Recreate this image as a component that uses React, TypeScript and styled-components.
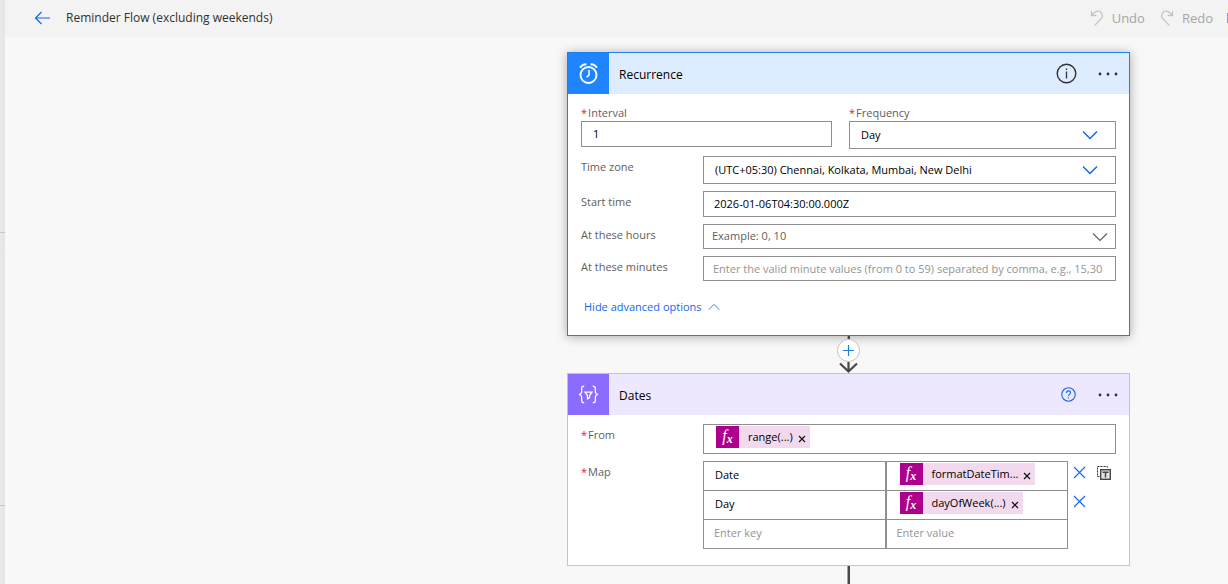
import React from "react";
import styled, { createGlobalStyle } from "styled-components";

const GlobalStyle = createGlobalStyle`
  *, *::before, *::after { box-sizing: border-box; }
  body {
    margin: 0;
    background: #f8f8f8;
    font-family: "Open Sans", "Noto Sans", sans-serif;
    font-size: 11px;
    color: #000;
    overflow-x: hidden;
  }
  button, input, select { font: inherit; color: inherit; }
  button { padding: 0; border: 0; background: none; cursor: pointer; }
  svg { display: block; flex: none; }
`;

const Page = styled.div`
  display: flex;
  min-height: 100vh;
`;

const Rail = styled.aside`
  flex: none;
  width: 5px;
  background: linear-gradient(90deg, #e9e9e9, #e5e5e5);
`;

const RailSection = styled.div<{ $height: number }>`
  height: ${(p) => p.$height}px;
  border-bottom: 1px solid #c8c8c8;
`;

const Main = styled.main`
  flex: 1;
  min-width: 0;
  display: flex;
  flex-direction: column;
`;

const TopBar = styled.header`
  display: flex;
  align-items: center;
  height: 37px;
  padding: 0 0 2px 29px;
  background: #f3f3f3;
`;

const BackButton = styled.button`
  margin-right: 15px;
`;

const FlowTitle = styled.h1`
  margin: 0;
  flex: 1;
  font-size: 12px;
  font-weight: 400;
  line-height: 20px;
  color: #323130;
`;

const Command = styled.button`
  display: flex;
  align-items: center;
  gap: 8px;
  margin-left: 15px;
  font-size: 13px;
  line-height: 20px;
  color: #a6a6a6;
`;

const BarEdge = styled.span`
  width: 1px;
  height: 10px;
  margin-left: 14px;
  background: #a58af0;
`;

const Canvas = styled.div`
  flex: 1;
  display: grid;
  grid-template-columns: minmax(0, 562fr) minmax(563px, 563fr) minmax(0, 98fr);
  padding-top: 15px;
`;

const Flow = styled.div`
  grid-column: 2;
  display: flex;
  flex-direction: column;
`;

const Card = styled.section<{ $selected?: boolean }>`
  border: 1px solid ${(p) => (p.$selected ? "#1f80ec" : "#c4c4c4")};
  background: #fff;
  box-shadow: ${(p) => (p.$selected ? "0 1px 10px rgba(0, 0, 0, 0.32)" : "none")};
`;

const CardHeader = styled.header<{ $bg: string }>`
  display: flex;
  align-items: center;
  height: 41px;
  padding-right: 11px;
  background: ${(p) => p.$bg};
`;

const CardIcon = styled.div<{ $bg: string }>`
  display: grid;
  place-items: center;
  width: 41px;
  height: 41px;
  background: ${(p) => p.$bg};
`;

const CardTitle = styled.h2`
  flex: 1;
  margin: 0 0 0 10px;
  padding-top: 2px;
  font-size: 12px;
  font-weight: 400;
  line-height: 20px;
`;

const HeaderAction = styled.button<{ $gap?: number }>`
  margin-right: ${(p) => p.$gap ?? 0}px;
`;

const CardBody = styled.div<{ $top: number; $bottom: number }>`
  display: flex;
  flex-direction: column;
  gap: 7px;
  padding: ${(p) => p.$top}px 13px ${(p) => p.$bottom}px;
`;

const PairRow = styled.div`
  display: grid;
  grid-template-columns: 251fr 267fr;
  column-gap: 17px;
  align-items: start;
`;

const TopLabel = styled.label`
  display: block;
  line-height: 16px;
  color: #605e5c;
`;

const Row = styled.div`
  display: grid;
  grid-template-columns: 122px minmax(0, 1fr);
  align-items: start;
`;

const Label = styled.label`
  line-height: 22px;
  color: #605e5c;
`;

const Star = styled.span`
  margin-right: 1px;
  color: #e0182d;
`;

const TextBox = styled.input<{ $height: number; $pad: number }>`
  display: block;
  width: 100%;
  height: ${(p) => p.$height}px;
  padding: 0 ${(p) => p.$pad}px 1px;
  border: 1px solid #8f8f8f;
  border-radius: 0;
  background: #fff;
  outline: 0;
  &::placeholder { color: #949494; opacity: 1; }
`;

const SelectWrap = styled.div`
  display: grid;
  align-items: center;
  & > * { grid-area: 1 / 1; }
  & > svg { justify-self: end; margin-right: 18px; pointer-events: none; }
  & > svg[data-tone="muted"] { margin-right: 8px; }
`;

const SelectBox = styled.select<{ $height: number; $muted?: boolean }>`
  appearance: none;
  width: 100%;
  height: ${(p) => p.$height}px;
  padding: 0 ${(p) => (p.$muted ? 8 : 11)}px 2px;
  border: 1px solid #8f8f8f;
  border-radius: 0;
  background: #fff;
  color: ${(p) => (p.$muted ? "#605e5c" : "#000")};
`;

const AdvancedToggle = styled.button`
  display: flex;
  align-items: center;
  align-self: flex-start;
  gap: 6px;
  margin: 8px 0 0 3px;
  line-height: 22px;
  color: #1267f0;
`;

const Connector = styled.div`
  display: flex;
  flex-direction: column;
  align-items: center;
`;

const Stem = styled.div<{ $grow?: boolean }>`
  width: 3px;
  height: 3px;
  flex: ${(p) => (p.$grow ? "1" : "none")};
  align-self: center;
  border-left: 1px solid #a0a0a0;
  background: #484848;
`;

const AddStep = styled.button`
  display: grid;
  place-items: center;
  width: 23px;
  height: 23px;
  border: 1px solid #c4c4c4;
  border-radius: 50%;
  background: #fff;
`;

const TokenField = styled.div`
  height: 30px;
  padding: 1px 12px;
  border: 1px solid #8f8f8f;
`;

const Token = styled.span`
  display: inline-flex;
  align-items: center;
  height: 22px;
  padding-right: 4px;
  background: #f3d9ed;
  vertical-align: top;
  line-height: 22px;
  white-space: nowrap;
`;

const TokenIcon = styled.span`
  width: 23px;
  height: 22px;
  margin-right: 9px;
  background: #ad008c;
  color: #fff;
  font: italic 400 16px/20px "Liberation Serif", serif;
  text-align: center;
  sub { font-size: 12px; font-weight: 700; line-height: 0; vertical-align: -2px; }
`;

const TokenRemove = styled.button`
  margin: 3px 0 0 5px;
`;

const MapTable = styled.table`
  width: 100%;
  border-collapse: collapse;
  table-layout: fixed;
`;

const KeyCell = styled.td`
  width: 182px;
  height: 29px;
  padding: 0;
  border: 1px solid #8f8f8f;
  border-right-width: 2px;
  vertical-align: top;
`;

const ValueCell = styled.td`
  width: 182px;
  padding: 1px 0 0 13px;
  border: 1px solid #8f8f8f;
  vertical-align: top;
`;

const ActionCell = styled.td`
  padding: 0 0 7px 5px;
`;

const ActionGroup = styled.div`
  display: flex;
  align-items: center;
  gap: 11px;
  height: 16px;
`;

const CellInput = styled.input<{ $pad: number }>`
  display: block;
  width: 100%;
  height: 25px;
  padding: 0 ${(p) => p.$pad}px;
  border: 0;
  background: transparent;
  outline: 0;
  &::placeholder { color: #949494; opacity: 1; }
`;

const EmptyValueCell = styled(ValueCell)`
  padding: 0;
`;

const Chevron = ({ muted, up, w = 16 }: { muted?: boolean; up?: boolean; w?: number }) => (
  <svg width={w} height={w / 2 + 2} viewBox="0 0 16 10" fill="none" data-tone={muted ? "muted" : "accent"}
    stroke={muted ? "#605e5c" : "#1267f0"} strokeWidth={muted || up ? 1.1 : 1.5}>
    <path d={up ? "M1 8.5 8 1.5l7 7" : "M1 1.5l7 7 7-7"} />
  </svg>
);

const Dots = () => (
  <svg width="20" height="4" viewBox="0 0 20 4" fill="#323130">
    <circle cx="2" cy="2" r="1.4" /><circle cx="10" cy="2" r="1.4" /><circle cx="18" cy="2" r="1.4" />
  </svg>
);

const CurvedArrow = ({ flip }: { flip?: boolean }) => (
  <svg width="14" height="16" viewBox="0 0 14 16" fill="none" stroke="#c2c2c2" strokeWidth="1.3">
    <g transform={flip ? "matrix(-1 0 0 1 14 0)" : undefined}>
      <path d="M1.500 1v4.500h4.800" />
      <path d="M1.800 5.300 4.400 2.600C6.300.7 9.200.6 11 2.400s1.800 4.700 0 6.500L4.800 15.200" />
    </g>
  </svg>
);

const Cross = () => (
  <svg width="13" height="13" viewBox="0 0 13 13" stroke="#1267f0" strokeWidth="1.1">
    <path d="M1 1l11 11M12 1 1 12" />
  </svg>
);

const AlarmIcon = () => (
  <svg width="19" height="21" viewBox="0 0 19 21" fill="none" stroke="#fff">
    <circle cx="9.500" cy="12" r="8" strokeWidth="1.900" />
    <path d="M10 7v5.200L7.600 14.200" strokeWidth="1.500" />
    <path d="M1.200 4.800C2.200 2.700 4 1.500 7.400 1.300M17.800 4.800C16.800 2.700 15 1.500 11.600 1.300" strokeWidth="2" />
  </svg>
);

const DataIcon = () => (
  <svg width="21" height="19" viewBox="0 0 22 20" fill="none" stroke="#fff" strokeWidth="1.3">
    <path d="M6.500 1.200C4.300 1.200 3.800 2 3.800 3.700v3.100C3.800 8.700 3 9.700 1 10c2 .3 2.800 1.300 2.800 3.200v3.100c0 1.700.5 2.500 2.700 2.500" />
    <path d="M15.500 1.200c2.200 0 2.700.8 2.700 2.500v3.100c0 1.900.8 2.900 2.800 3.200-2 .3-2.800 1.300-2.800 3.200v3.100c0 1.700-.5 2.500-2.700 2.500" />
    <path d="M7.300 7.500h7.400l-2.600 3.600v2.200l-2.200 1.300v-3.500z" />
  </svg>
);

const CopyIcon = () => (
  <svg width="14" height="14" viewBox="0 0 14 14" fill="none">
    <path d="M2.500 10.500h-2v-10h10v2" stroke="#323130" strokeDasharray="2 1" />
    <rect x="3.700" y="3.700" width="9.600" height="9.600" fill="#e4e4e4" stroke="#484644" strokeWidth="1.400" />
    <path d="M5.500 6.200h6M8.500 6v5.500" stroke="#484644" strokeWidth="1.500" />
  </svg>
);

const Fx = ({ children }: { children: string }) => (
  <Token>
    <TokenIcon aria-hidden="true">f<sub>x</sub></TokenIcon>
    {children}
    <TokenRemove aria-label="Remove">
      <svg width="8" height="8" viewBox="0 0 8 8" stroke="#111" strokeWidth="1.200"><path d="M1 1l6 6M7 1 1 7" /></svg>
    </TokenRemove>
  </Token>
);

const entries = [
  { key: "Date", value: "formatDateTim..." },
  { key: "Day", value: "dayOfWeek(...)" },
];

export default function App() {
  return (
    <>
      <GlobalStyle />
      <Page>
        <Rail>
          <RailSection $height={233} />
          <RailSection $height={273} />
        </Rail>
        <Main>
          <TopBar>
            <BackButton aria-label="Back">
              <svg width="17" height="14" viewBox="0 0 17 14" fill="none" stroke="#1267f0" strokeWidth="1.200">
                <path d="M1.500 7H16M7.500 1l-6 6 6 6" />
              </svg>
            </BackButton>
            <FlowTitle>Reminder Flow (excluding weekends)</FlowTitle>
            <Command><CurvedArrow />Undo</Command>
            <Command><CurvedArrow flip />Redo</Command>
            <BarEdge />
          </TopBar>
          <Canvas>
            <Flow>
              <Card $selected>
                <CardHeader $bg="#deecff">
                  <CardIcon $bg="#1f85ff"><AlarmIcon /></CardIcon>
                  <CardTitle>Recurrence</CardTitle>
                  <HeaderAction $gap={21} aria-label="Information">
                    <svg width="21" height="21" viewBox="0 0 21 21" fill="none" stroke="#323130">
                      <circle cx="10.500" cy="10.500" r="9.300" strokeWidth="1.400" />
                      <path d="M10.500 8.500v7M10.500 5.500v1.500" strokeWidth="1.300" />
                    </svg>
                  </HeaderAction>
                  <HeaderAction aria-label="More"><Dots /></HeaderAction>
                </CardHeader>
                <CardBody $top={11} $bottom={17}>
                  <PairRow>
                    <div>
                      <TopLabel htmlFor="interval"><Star>*</Star>Interval</TopLabel>
                      <TextBox id="interval" $height={26} $pad={11} defaultValue="1" />
                    </div>
                    <div>
                      <TopLabel htmlFor="frequency"><Star>*</Star>Frequency</TopLabel>
                      <SelectWrap>
                        <SelectBox id="frequency" $height={28}><option>Day</option></SelectBox>
                        <Chevron />
                      </SelectWrap>
                    </div>
                  </PairRow>
                  <Row>
                    <Label htmlFor="zone">Time zone</Label>
                    <SelectWrap>
                      <SelectBox id="zone" $height={28}>
                        <option>(UTC+05:30) Chennai, Kolkata, Mumbai, New Delhi</option>
                      </SelectBox>
                      <Chevron />
                    </SelectWrap>
                  </Row>
                  <Row>
                    <Label htmlFor="start">Start time</Label>
                    <TextBox id="start" $height={26} $pad={10} defaultValue="2026-01-06T04:30:00.000Z" />
                  </Row>
                  <Row>
                    <Label htmlFor="hours">At these hours</Label>
                    <SelectWrap>
                      <SelectBox id="hours" $height={25} $muted><option>Example: 0, 10</option></SelectBox>
                      <Chevron muted />
                    </SelectWrap>
                  </Row>
                  <Row>
                    <Label htmlFor="minutes">At these minutes</Label>
                    <TextBox id="minutes" $height={25} $pad={9}
                      placeholder="Enter the valid minute values (from 0 to 59) separated by comma, e.g., 15,30" />
                  </Row>
                  <AdvancedToggle>Hide advanced options<Chevron up w={12} /></AdvancedToggle>
                </CardBody>
              </Card>
              <Connector>
                <Stem />
                <AddStep aria-label="Insert a new step">
                  <svg width="11" height="11" viewBox="0 0 11 11" stroke="#1a7fd6" strokeWidth="1.200"><path d="M5.500 0v11M0 5.500h11" /></svg>
                </AddStep>
                <svg width="19" height="11" viewBox="0 0 19 11" fill="none" stroke="#484848" strokeWidth="2.200">
                  <path d="M9.500 0v9M1 1.500l8.500 8 8.500-8" />
                </svg>
              </Connector>
              <Card>
                <CardHeader $bg="#eee8ff">
                  <CardIcon $bg="#8c6cff"><DataIcon /></CardIcon>
                  <CardTitle>Dates</CardTitle>
                  <HeaderAction $gap={22} aria-label="Help">
                    <svg width="15" height="15" viewBox="0 0 15 15" fill="none" stroke="#1267f0" strokeWidth="1.100">
                      <circle cx="7.500" cy="7.500" r="6.700" />
                      <path d="M5.500 6c0-1.300.8-2.100 2-2.100s2 .8 2 1.900c0 1.500-2 1.600-2 3.300M7.500 10.200v1.300" />
                    </svg>
                  </HeaderAction>
                  <HeaderAction aria-label="More"><Dots /></HeaderAction>
                </CardHeader>
                <CardBody $top={9} $bottom={16}>
                  <Row>
                    <Label as="span"><Star>*</Star>From</Label>
                    <TokenField><Fx>range(...)</Fx></TokenField>
                  </Row>
                  <Row>
                    <Label as="span"><Star>*</Star>Map</Label>
                    <MapTable>
                      <tbody>
                        {entries.map((e, i) => (
                          <tr key={e.key}>
                            <KeyCell><CellInput $pad={11} aria-label="Key" defaultValue={e.key} /></KeyCell>
                            <ValueCell><Fx>{e.value}</Fx></ValueCell>
                            <ActionCell>
                              <ActionGroup>
                                <button aria-label="Delete"><Cross /></button>
                                {i === 0 && <button aria-label="Switch to text mode"><CopyIcon /></button>}
                              </ActionGroup>
                            </ActionCell>
                          </tr>
                        ))}
                        <tr>
                          <KeyCell><CellInput $pad={10} aria-label="New key" placeholder="Enter key" /></KeyCell>
                          <EmptyValueCell><CellInput $pad={10} aria-label="New value" placeholder="Enter value" /></EmptyValueCell>
                          <ActionCell />
                        </tr>
                      </tbody>
                    </MapTable>
                  </Row>
                </CardBody>
              </Card>
              <Stem $grow />
            </Flow>
          </Canvas>
        </Main>
      </Page>
    </>
  );
}
